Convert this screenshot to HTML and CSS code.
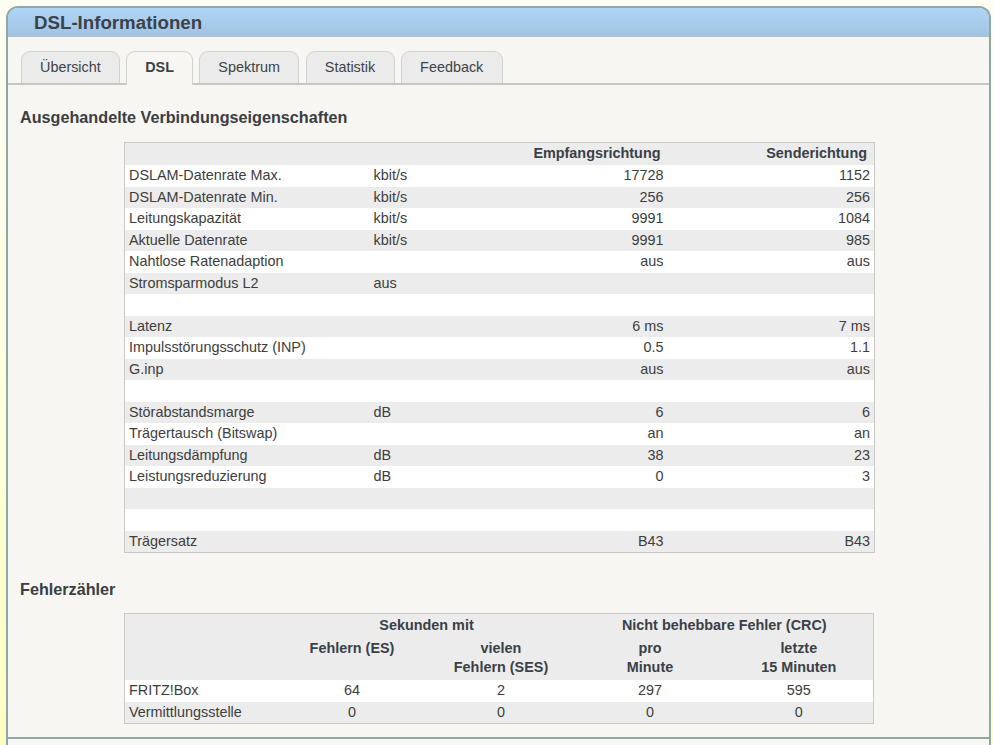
FILE: index.html
```html
<!DOCTYPE html>
<html lang="de">
<head>
<meta charset="utf-8">
<title>DSL-Informationen</title>
<link rel="stylesheet" href="styles.css">
</head>
<body>
<div class="panel">
  <div class="panel-head">DSL-Informationen</div>
  <div class="tabs">
    <div class="tab">Übersicht</div>
    <div class="tab active">DSL</div>
    <div class="tab">Spektrum</div>
    <div class="tab">Statistik</div>
    <div class="tab">Feedback</div>
  </div>
  <div class="content">
    <h2 class="section-title first">Ausgehandelte Verbindungseigenschaften</h2>
    <table class="grid props">
      <colgroup><col class="c1"><col class="c2"><col class="c3"><col class="c4"></colgroup>
      <thead>
        <tr><th></th><th></th><th class="num">Empfangsrichtung</th><th class="num">Senderichtung</th></tr>
      </thead>
      <tbody>
        <tr><td>DSLAM-Datenrate Max.</td><td>kbit/s</td><td class="num">17728</td><td class="num">1152</td></tr>
        <tr><td>DSLAM-Datenrate Min.</td><td>kbit/s</td><td class="num">256</td><td class="num">256</td></tr>
        <tr><td>Leitungskapazität</td><td>kbit/s</td><td class="num">9991</td><td class="num">1084</td></tr>
        <tr><td>Aktuelle Datenrate</td><td>kbit/s</td><td class="num">9991</td><td class="num">985</td></tr>
        <tr><td>Nahtlose Ratenadaption</td><td></td><td class="num">aus</td><td class="num">aus</td></tr>
        <tr><td>Stromsparmodus L2</td><td>aus</td><td></td><td></td></tr>
        <tr><td></td><td></td><td></td><td></td></tr>
        <tr><td>Latenz</td><td></td><td class="num">6 ms</td><td class="num">7 ms</td></tr>
        <tr><td>Impulsstörungsschutz (INP)</td><td></td><td class="num">0.5</td><td class="num">1.1</td></tr>
        <tr><td>G.inp</td><td></td><td class="num">aus</td><td class="num">aus</td></tr>
        <tr><td></td><td></td><td></td><td></td></tr>
        <tr><td>Störabstandsmarge</td><td>dB</td><td class="num">6</td><td class="num">6</td></tr>
        <tr><td>Trägertausch (Bitswap)</td><td></td><td class="num">an</td><td class="num">an</td></tr>
        <tr><td>Leitungsdämpfung</td><td>dB</td><td class="num">38</td><td class="num">23</td></tr>
        <tr><td>Leistungsreduzierung</td><td>dB</td><td class="num">0</td><td class="num">3</td></tr>
        <tr><td></td><td></td><td></td><td></td></tr>
        <tr><td></td><td></td><td></td><td></td></tr>
        <tr><td>Trägersatz</td><td></td><td class="num">B43</td><td class="num">B43</td></tr>
      </tbody>
    </table>

    <h2 class="section-title second">Fehlerzähler</h2>
    <table class="grid errors">
      <colgroup><col class="e1"><col class="e2"><col class="e2"><col class="e2"><col class="e2"></colgroup>
      <thead>
        <tr class="h1"><th></th><th colspan="2">Sekunden mit</th><th colspan="2">Nicht behebbare Fehler (CRC)</th></tr>
        <tr class="h2"><th></th><th>Fehlern (ES)</th><th>vielen<br>Fehlern (SES)</th><th>pro<br>Minute</th><th>letzte<br>15 Minuten</th></tr>
      </thead>
      <tbody>
        <tr><td>FRITZ!Box</td><td class="mid">64</td><td class="mid">2</td><td class="mid">297</td><td class="mid">595</td></tr>
        <tr><td>Vermittlungsstelle</td><td class="mid">0</td><td class="mid">0</td><td class="mid">0</td><td class="mid">0</td></tr>
      </tbody>
    </table>
  </div>
  <div class="footer"></div>
</div>
</body>
</html>
```

FILE: styles.css
```css
html, body {
  margin: 0;
  padding: 0;
}
body {
  height: 745px;
  overflow: hidden;
  padding: 6px 2px 0 6px;
  box-sizing: border-box;
  background: linear-gradient(to bottom, #fdfdf3 0%, #fefee0 50%, #ffffc2 100%);
  font-family: "Liberation Sans", Arial, sans-serif;
  font-size: 14.4px;
  color: #3d3d3d;
}
.panel {
  width: 985px;
  box-sizing: border-box;
  border: 2px solid #8fa8a4;
  border-bottom: none;
  border-radius: 12px 12px 0 0;
  background: #f7f6f2;
  overflow: hidden;
}
.panel-head {
  height: 29.3px;
  line-height: 29.3px;
  padding-left: 26px;
  font-size: 18.7px;
  font-weight: bold;
  color: #3b4249;
  background: linear-gradient(to bottom, #aed5f7 0%, #a2c3df 100%);
}
.tabs {
  display: flex;
  gap: 6.3px;
  padding: 13.7px 0 0 12.7px;
  border-bottom: 2px solid #c6c6c4;
  height: 32px;
}
.tab {
  height: 32px;
  box-sizing: border-box;
  padding: 0 18.3px;
  line-height: 30px;
  border: 1px solid #d2d2d0;
  border-bottom: none;
  border-radius: 9px 9px 0 0;
  background: #ebebeb;
  color: #3d4247;
}
.tab.active {
  background: #f7f6f2;
  font-weight: bold;
  height: 34px;
  padding: 0 17.8px;
  position: relative;
  z-index: 1;
  color: #3b4249;
}
.content {
  padding: 0 12px 13px 12px;
  border-bottom: 2px solid #8fa8a4;
}
.section-title {
  margin: 0;
  font-size: 16.2px;
  line-height: 19px;
  font-weight: bold;
  color: #3b3e42;
}
.section-title.first {
  padding-top: 23.5px;
  margin-bottom: 14.5px;
}
.section-title.second {
  margin-top: 27px;
  margin-bottom: 13.8px;
}
.grid {
  margin-left: 104px;
  width: 750px;
  border-collapse: collapse;
  border: 1px solid #c8c8c6;
  table-layout: fixed;
}
.grid th, .grid td {
  padding: 0 4px;
  white-space: nowrap;
  line-height: 17px;
}
.grid th {
  font-weight: bold;
  color: #3a4047;
}
.grid thead tr {
  background: #ececec;
}
.grid tbody tr {
  height: 21.53px;
}
.grid tbody tr:nth-child(odd) {
  background: #ffffff;
}
.grid tbody tr:nth-child(even) {
  background: #ececec;
}
.props .c1 { width: 245px; }
.props .c2 { width: 100px; }
.props .c3 { width: 198px; }
.props .c4 { width: 207px; }
.props thead tr {
  height: 22.5px;
}
.props th.num {
  text-align: right;
  padding-right: 7px;
}
.num {
  text-align: right;
}
.errors .e1 { width: 153px; }
.errors .e2 { width: 149px; }
.errors th {
  text-align: center;
  line-height: 19px;
  vertical-align: top;
}
.errors tr.h1 th {
  padding-top: 2.2px;
  padding-bottom: 2px;
}
.errors tr.h2 th {
  padding-top: 1.8px;
  padding-bottom: 3.5px;
}
.mid {
  text-align: center;
}
.footer {
  height: 40px;
}
```
